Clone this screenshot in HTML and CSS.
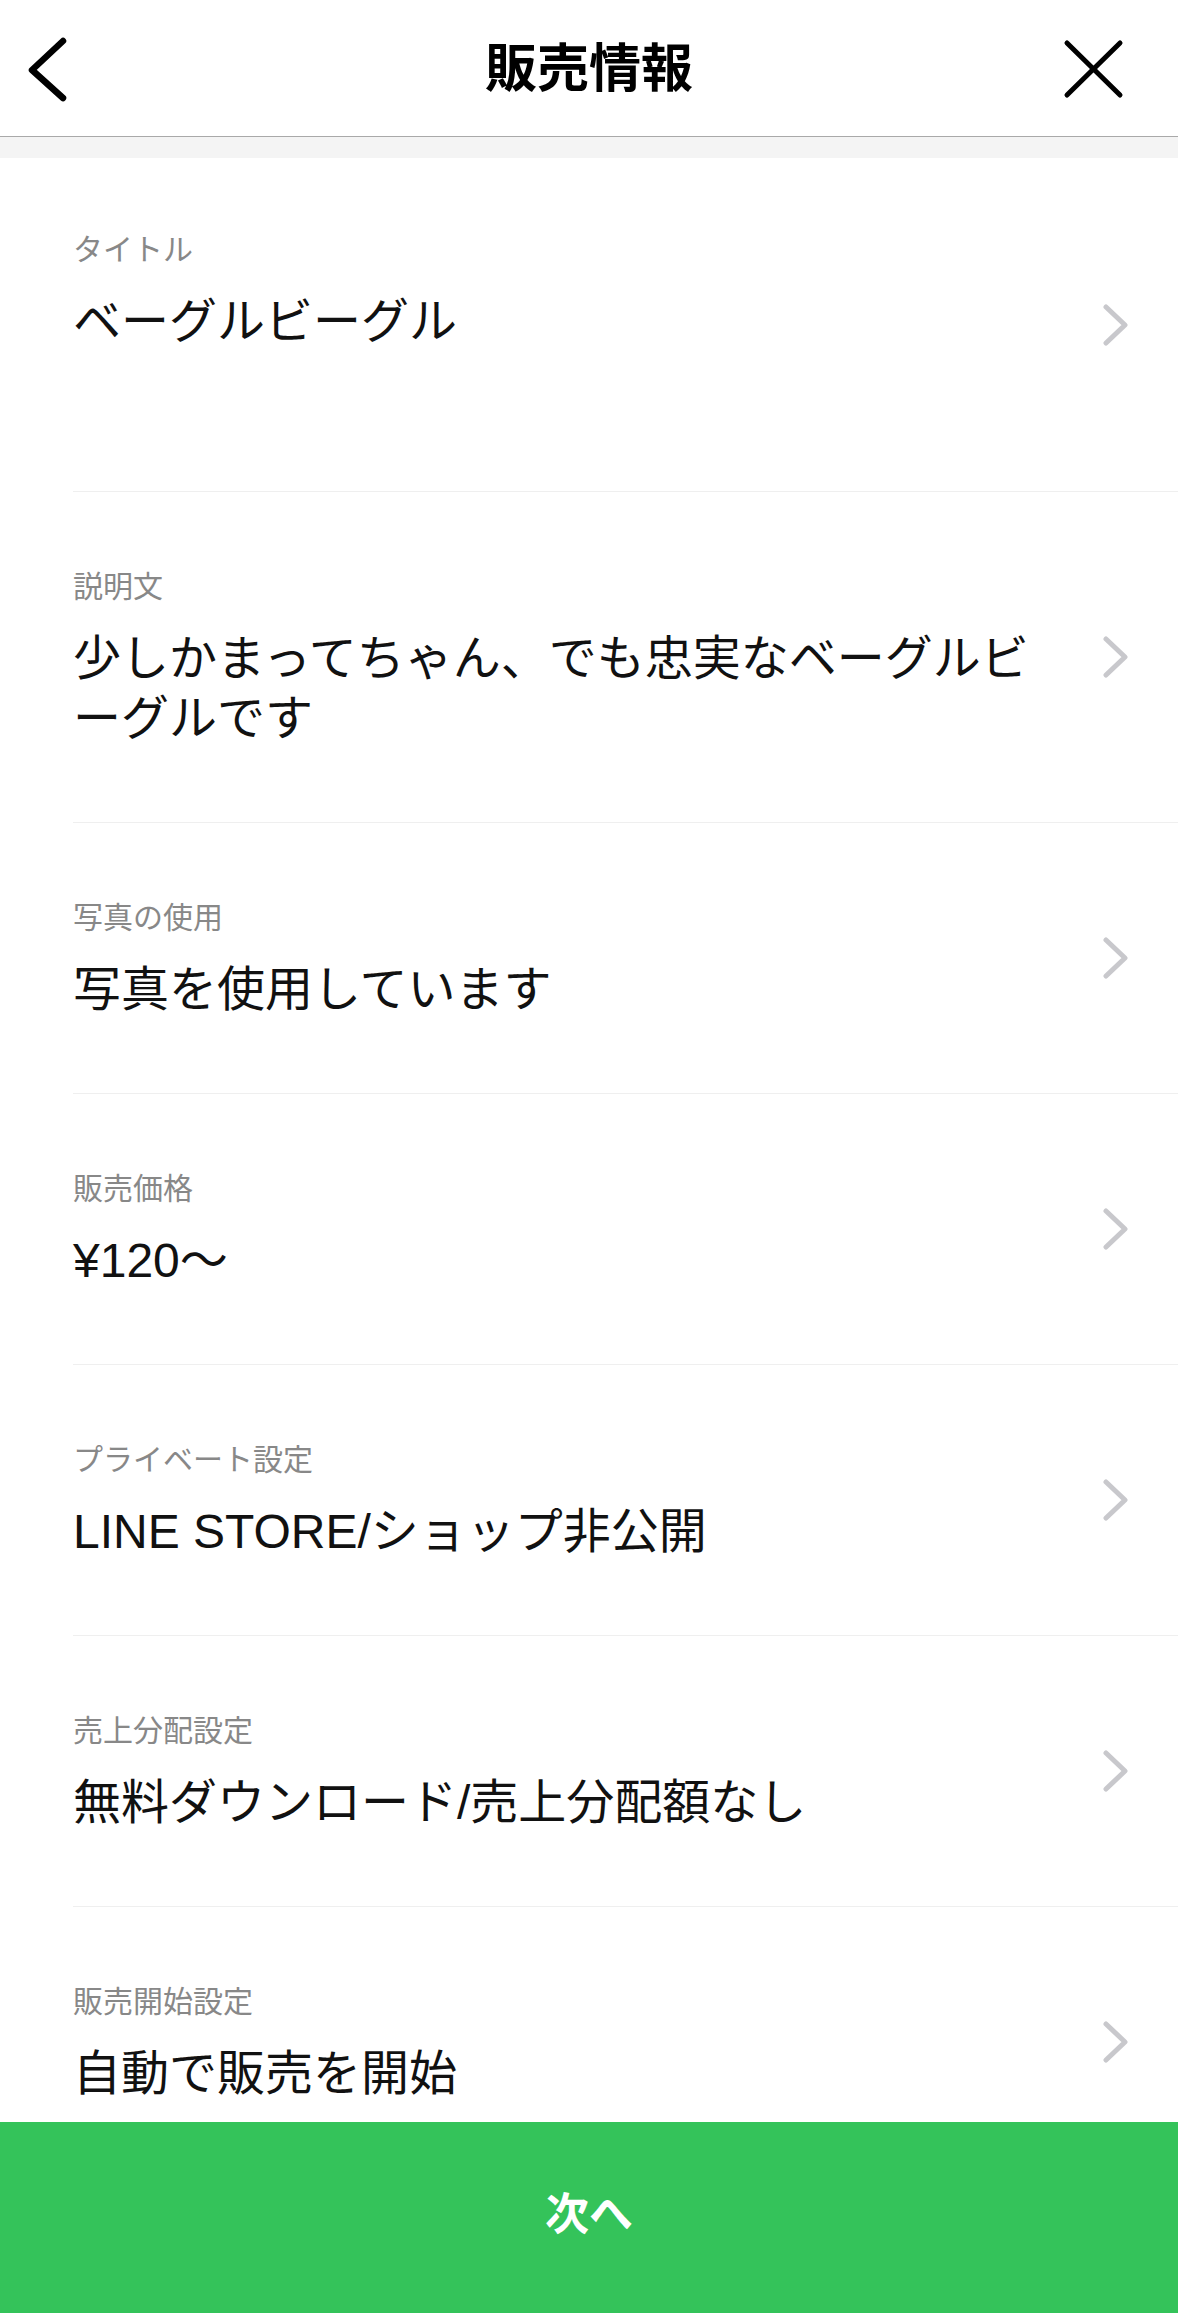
FILE: index.html
```html
<!DOCTYPE html>
<html lang="ja">
<head>
<meta charset="utf-8">
<title>販売情報</title>
<link rel="stylesheet" href="styles.css">
</head>
<body>
<header class="header">
  <div class="header-left">
    <svg class="icon-back" width="90" height="136" viewBox="0 0 90 136">
      <polyline points="63,41 32,70 63,98" fill="none" stroke="#000" stroke-width="6.5" stroke-linecap="round" stroke-linejoin="round"/>
    </svg>
  </div>
  <h1 class="header-title">販売情報</h1>
  <div class="header-right">
    <svg class="icon-close" width="150" height="136" viewBox="0 0 150 136">
      <line x1="39" y1="43" x2="92" y2="95" stroke="#000" stroke-width="5" stroke-linecap="round"/>
      <line x1="92" y1="43" x2="39" y2="95" stroke="#000" stroke-width="5" stroke-linecap="round"/>
    </svg>
  </div>
</header>
<div class="band"></div>

<main class="list">
  <div class="row row-first">
    <div class="row-inner">
      <div class="texts">
        <div class="label">タイトル</div>
        <div class="value">ベーグルビーグル</div>
        <div class="ghost"></div>
      </div>
      <svg class="chev" width="28" height="42" viewBox="0 0 28 42"><polyline points="4,3 23,21 4,39" fill="none" stroke="#c8c8cc" stroke-width="5" stroke-linecap="round" stroke-linejoin="round"/></svg>
    </div>
  </div>

  <div class="row">
    <div class="row-inner">
      <div class="texts">
        <div class="label">説明文</div>
        <div class="value value-wrap">少しかまってちゃん、でも忠実なベーグルビーグルです</div>
      </div>
      <svg class="chev" width="28" height="42" viewBox="0 0 28 42"><polyline points="4,3 23,21 4,39" fill="none" stroke="#c8c8cc" stroke-width="5" stroke-linecap="round" stroke-linejoin="round"/></svg>
    </div>
  </div>

  <div class="row">
    <div class="row-inner">
      <div class="texts">
        <div class="label">写真の使用</div>
        <div class="value">写真を使用しています</div>
      </div>
      <svg class="chev" width="28" height="42" viewBox="0 0 28 42"><polyline points="4,3 23,21 4,39" fill="none" stroke="#c8c8cc" stroke-width="5" stroke-linecap="round" stroke-linejoin="round"/></svg>
    </div>
  </div>

  <div class="row">
    <div class="row-inner">
      <div class="texts">
        <div class="label">販売価格</div>
        <div class="value">¥120～</div>
      </div>
      <svg class="chev" width="28" height="42" viewBox="0 0 28 42"><polyline points="4,3 23,21 4,39" fill="none" stroke="#c8c8cc" stroke-width="5" stroke-linecap="round" stroke-linejoin="round"/></svg>
    </div>
  </div>

  <div class="row">
    <div class="row-inner">
      <div class="texts">
        <div class="label">プライベート設定</div>
        <div class="value">LINE STORE/ショップ非公開</div>
      </div>
      <svg class="chev" width="28" height="42" viewBox="0 0 28 42"><polyline points="4,3 23,21 4,39" fill="none" stroke="#c8c8cc" stroke-width="5" stroke-linecap="round" stroke-linejoin="round"/></svg>
    </div>
  </div>

  <div class="row">
    <div class="row-inner">
      <div class="texts">
        <div class="label">売上分配設定</div>
        <div class="value">無料ダウンロード/売上分配額なし</div>
      </div>
      <svg class="chev" width="28" height="42" viewBox="0 0 28 42"><polyline points="4,3 23,21 4,39" fill="none" stroke="#c8c8cc" stroke-width="5" stroke-linecap="round" stroke-linejoin="round"/></svg>
    </div>
  </div>

  <div class="row">
    <div class="row-inner">
      <div class="texts">
        <div class="label">販売開始設定</div>
        <div class="value">自動で販売を開始</div>
      </div>
      <svg class="chev" width="28" height="42" viewBox="0 0 28 42"><polyline points="4,3 23,21 4,39" fill="none" stroke="#c8c8cc" stroke-width="5" stroke-linecap="round" stroke-linejoin="round"/></svg>
    </div>
  </div>
</main>

<div class="next-bar">次へ</div>
</body>
</html>
```
FILE: styles.css
```css
html, body {
  margin: 0;
  padding: 0;
  background: #ffffff;
}
body {
  width: 1178px;
  font-family: "Noto Sans CJK JP", "Noto Sans", sans-serif;
  color: #111111;
  overflow: hidden;
}
.header {
  height: 136px;
  display: grid;
  grid-template-columns: 150px 1fr 150px;
  align-items: center;
  border-bottom: 1px solid #a9a9a9;
  box-sizing: content-box;
}
.header-left,
.header-right {
  height: 136px;
  display: flex;
}
.header-right {
  justify-content: flex-end;
}
.icon-back,
.icon-close {
  display: block;
}
.header-title {
  margin: 0 0 5px 0;
  text-align: center;
  font-size: 52px;
  font-weight: 700;
  line-height: 1.2;
  color: #000;
}
.band {
  height: 21px;
  background: #f4f4f4;
}
.list {
  display: flex;
  flex-direction: column;
}
.row {
  padding-left: 73px;
}
.row-inner {
  display: flex;
  align-items: center;
  justify-content: space-between;
  border-bottom: 1px solid #efefef;
  padding-right: 48px;
}
.texts {
  padding: 70px 0 73px 0;
  flex: 1;
}
.row-first .texts {
  padding-top: 67px;
}
.label {
  font-size: 30px;
  line-height: 44px;
  color: #888888;
}
.value {
  margin-top: 23px;
  font-family: "Liberation Sans", "Noto Sans CJK JP", sans-serif;
  font-size: 48px;
  line-height: 60px;
  color: #111111;
}
.value-wrap {
  max-width: 990px;
}
.ghost {
  height: 66px;
}
.chev {
  display: block;
  flex: none;
}
.next-bar {
  position: fixed;
  left: 0;
  right: 0;
  bottom: 0;
  height: 191px;
  background: #34c35a;
  color: #ffffff;
  font-size: 44px;
  font-weight: 700;
  display: flex;
  align-items: center;
  justify-content: center;
  padding-bottom: 14px;
  box-sizing: border-box;
}
```
